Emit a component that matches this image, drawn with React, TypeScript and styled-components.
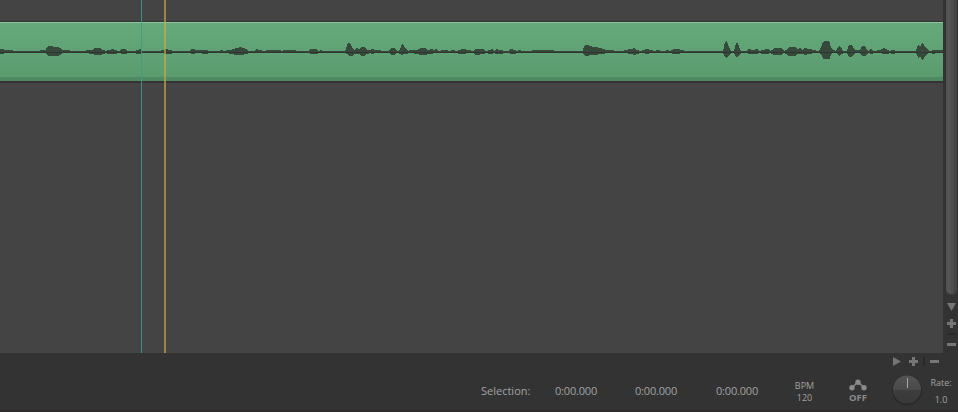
import React from "react";
import styled, { createGlobalStyle } from "styled-components";

const GlobalStyle = createGlobalStyle`
  * { box-sizing: border-box; }
  body { margin: 0; background: #333; overflow: hidden; font-family: "Open Sans", "Noto Sans", sans-serif; }
`;

const Window = styled.div`
  width: 958px;
  height: 412px;
  display: flex;
  flex-direction: column;
  background: #333;
`;

const Workspace = styled.div`
  display: flex;
  height: 353px;
`;

const Arrange = styled.div`
  position: relative;
  width: 943px;
  height: 353px;
  padding-top: 21px;
  overflow: hidden;
  background: #444;
`;

const Clip = styled.div`
  height: 62px;
  border-top: 1px solid #333;
  border-bottom: 2px solid #333;
  background: linear-gradient(to bottom, #8fc9a2 0 1px, #65a97b 1px, #5b9c6f 55px, #4d8a61 55px);
`;

const Wave = styled.svg`
  display: block;
`;

const Cursor = styled.div<{ $x: number; $w: number; $color: string }>`
  position: absolute;
  top: 0;
  bottom: 0;
  left: ${(p) => p.$x}px;
  width: ${(p) => p.$w}px;
  background: ${(p) => p.$color};
`;

const VerticalBar = styled.div`
  width: 15px;
  padding-left: 3px;
  display: flex;
  flex-direction: column;
`;

const Thumb = styled.div`
  width: 11px;
  height: 295px;
  border-radius: 0 0 5px 5px;
  background: linear-gradient(to right, #555 0 5px, #4d4d4d 5px 8px, #444 8px);
  box-shadow: inset 0 -1px 1px #3b3b3b;
`;

const ZoomIcons = styled.svg`
  display: block;
  fill: #757575;
`;

const HorizontalBar = styled.div`
  height: 17px;
  display: flex;
  justify-content: flex-end;
  padding-right: 18px;
`;

const Transport = styled.div`
  height: 42px;
  display: flex;
  padding-left: 481px;
  color: #a2a2a2;
  background: linear-gradient(to bottom, #333 40px, #302c2e 40px);

  > * { flex-shrink: 0; }
`;

const Reading = styled.div<{ $w: number; $spacing?: number }>`
  width: ${(p) => p.$w}px;
  padding-top: 13px;
  font-size: 11px;
  line-height: 16px;
  letter-spacing: ${(p) => p.$spacing ?? 0}px;
  white-space: nowrap;
`;

const Stack = styled.div<{ $w: number; $top: number; $step: number; $size: number }>`
  width: ${(p) => p.$w}px;
  padding-top: ${(p) => p.$top}px;
  font-size: ${(p) => p.$size}px;
  line-height: ${(p) => p.$step}px;
  text-align: center;
  white-space: nowrap;
`;

const Envelope = styled.div`
  width: 24px;
  margin-left: 31px;
  padding-top: 9px;
  display: flex;
  flex-direction: column;
  align-items: center;
  font-size: 9.5px;
  font-weight: 700;
  line-height: 13px;
  color: #8b8b8b;
`;

const Knob = styled.svg`
  display: block;
  margin-left: 21px;
  margin-top: 3px;
`;

// Each entry: x, rows above the centre line, rows below it.
const peaks: [number, number, number][] = [
  [0, 2, 1], [3, 2, 1], [5, 1, 0], [12, 1, 0], [13, 0, 0], [39, 0, 0], [40, 1, 0], [45, 1, 0], [46, 2, 1], [47, 4, 2], [48, 5, 3],
  [52, 5, 3], [53, 4, 3], [57, 4, 3], [60, 3, 2], [63, 1, 0], [69, 1, 0], [70, 0, 0], [85, 0, 0],
  [86, 1, 0], [92, 1, 1], [95, 3, 2], [100, 3, 2], [103, 1, 1], [106, 0, 0], [108, 1, 1], [113, 2, 1], [115, 1, 1],
  [119, 0, 0], [122, 2, 1], [125, 2, 1], [128, 0, 0], [134, 0, 0], [137, 1, 1], [140, 2, 1], [142, 0, 0],
  [160, 0, 0], [162, 1, 0], [166, 2, 1], [170, 1, 1], [173, 0, 0], [190, 0, 0], [191, 2, 1], [194, 2, 1],
  [196, 1, 0], [207, 1, 1], [209, 0, 0], [219, 0, 0], [221, 1, 0], [224, 0, 0], [227, 1, 0], [231, 1, 1],
  [236, 3, 2], [241, 4, 2], [246, 2, 1], [249, 0, 0], [254, 0, 0], [256, 2, 0], [259, 1, 0], [264, 0, 0],
  [267, 1, 0], [280, 1, 0], [281, 0, 0], [284, 1, 0], [295, 1, 0], [296, 0, 0], [308, 0, 0], [311, 2, 1],
  [316, 2, 1], [319, 0, 0], [321, 1, 0], [323, 0, 0], [345, 0, 0], [347, 5, 1], [348, 8, 2], [350, 8, 3], [352, 4, 3],
  [354, 1, 1], [357, 3, 1], [359, 1, 1], [361, 4, 3], [364, 4, 3], [367, 1, 1], [370, 1, 0], [372, 2, 1],
  [375, 1, 0], [380, 1, 0], [382, 0, 0], [389, 0, 0], [391, 3, 2], [394, 3, 2], [397, 0, 0], [400, 1, 1],
  [402, 8, 2], [404, 5, 1], [407, 1, 1], [408, 0, 0], [410, 1, 0], [417, 1, 1], [421, 3, 2], [425, 3, 2], [428, 1, 1],
  [432, 2, 1], [434, 1, 0], [436, 2, 0], [438, 0, 0], [443, 1, 0], [447, 1, 0], [449, 0, 0], [452, 1, 0],
  [457, 0, 0], [459, 1, 1], [463, 2, 1], [468, 1, 0], [473, 0, 0], [476, 2, 2], [483, 2, 1], [486, 0, 0],
  [489, 1, 1], [492, 2, 1], [494, 0, 0], [496, 2, 1], [500, 1, 1], [505, 0, 0], [508, 0, 0], [511, 2, 1],
  [515, 1, 1], [517, 0, 0], [519, 1, 0], [523, 0, 0], [531, 0, 0], [533, 1, 0], [553, 1, 0], [555, 0, 0],
  [583, 0, 0], [584, 5, 2], [585, 6, 3], [588, 6, 3], [589, 5, 2], [595, 4, 2], [600, 3, 1], [603, 2, 1], [606, 1, 0],
  [613, 1, 0], [615, 0, 0], [622, 0, 0], [625, 1, 0], [631, 2, 1], [634, 3, 2], [637, 1, 1], [640, 0, 0],
  [643, 1, 0], [647, 2, 1], [651, 1, 0], [654, 0, 0], [657, 1, 0], [663, 0, 0], [668, 1, 0], [670, 0, 0],
  [674, 2, 1], [678, 2, 1], [681, 1, 0], [687, 0, 0], [723, 0, 0], [724, 4, 2], [725, 9, 4], [726, 10, 5], [727, 9, 5],
  [729, 4, 2], [731, 0, 0], [734, 0, 0], [735, 4, 2], [736, 8, 4], [738, 8, 4], [740, 2, 1], [741, 0, 0], [746, 0, 0],
  [749, 2, 1], [753, 1, 1], [757, 2, 1], [759, 0, 0], [762, 1, 1], [768, 2, 1], [770, 0, 0], [772, 1, 1],
  [774, 3, 2], [781, 3, 2], [784, 0, 0], [786, 1, 1], [789, 4, 3], [795, 4, 3], [797, 2, 1], [800, 3, 1],
  [802, 1, 1], [805, 3, 2], [809, 2, 1], [814, 1, 0], [817, 0, 0], [819, 0, 0], [820, 2, 1], [822, 6, 2], [823, 9, 6], [824, 10, 6],
  [828, 10, 6], [830, 8, 6], [831, 3, 1], [833, 1, 0], [836, 0, 0], [837, 2, 1], [839, 5, 3], [842, 2, 1], [843, 0, 0],
  [847, 0, 0], [849, 6, 4], [852, 6, 4], [854, 2, 1], [855, 1, 0], [859, 1, 0], [860, 1, 1], [862, 5, 3], [865, 5, 3], [867, 1, 1], [868, 0, 0],
  [871, 2, 1], [874, 0, 0], [880, 1, 0], [884, 3, 1], [888, 1, 1], [890, 0, 0], [892, 1, 1], [898, 0, 0],
  [916, 0, 0], [917, 4, 2], [919, 7, 6], [920, 4, 3], [921, 6, 5], [922, 8, 7], [923, 8, 7], [925, 4, 3], [928, 1, 0], [930, 0, 0], [933, 1, 1],
  [937, 1, 0], [943, 1, 0],
];

const wavePath =
  "M" + peaks.map(([x, up]) => `${x} ${29 - up}`).join("L") +
  "L" + [...peaks].reverse().map(([x, , down]) => `${x} ${31 + down}`).join("L") + "Z";

export default function App() {
  return (
    <>
      <GlobalStyle />
      <Window>
        <Workspace>
          <Arrange>
            <Clip>
              <Wave width="943" height="59" shapeRendering="crispEdges">
                <path d={wavePath} fill="#354a3b" />
                <path d="M0 30H943V31H0Z" fill="#303432" />
              </Wave>
            </Clip>
            <Cursor $x={141} $w={1} $color="rgba(58, 157, 137, .87)" />
            <Cursor $x={164} $w={2} $color="rgba(204, 168, 72, .66)" />
          </Arrange>
          <VerticalBar>
            <Thumb />
            <ZoomIcons width="12" height="58">
              <path d="M1 8h9l-4.5 8z" />
              <path d="M4 24h3v3h3v3H7v3H4v-3H1v-3h3zM1 48h9v3H1z" />
              <path d="M1 38h9v2H1z" fill="#292929" />
            </ZoomIcons>
          </VerticalBar>
        </Workspace>
        <HorizontalBar>
          <ZoomIcons width="48" height="17">
            <path d="M1 4l8 4.5L1 13z" />
            <path d="M20 4h3v3h3v3h-3v3h-3v-3h-3V7h3zM38 7h9v3h-9z" />
            <path d="M31 4h2v9h-2z" fill="#292929" />
          </ZoomIcons>
        </HorizontalBar>
        <Transport>
          <Reading $w={74}>Selection:</Reading>
          <Reading $w={80} $spacing={-0.18}>0:00.000</Reading>
          <Reading $w={81} $spacing={-0.18}>0:00.000</Reading>
          <Reading $w={78} $spacing={-0.18}>0:00.000</Reading>
          <Stack $w={21} $top={10} $step={12} $size={9}>
            <div>BPM</div>
            <div>120</div>
          </Stack>
          <Envelope>
            <svg width="18" height="12" fill="#8b8b8b">
              <path d="M3 8.5L9 3l6 5.500" fill="none" stroke="#8b8b8b" strokeWidth="1.3" />
              <circle cx="9" cy="3.300" r="2.700" />
              <circle cx="3" cy="8.700" r="2.700" />
              <circle cx="15" cy="8.700" r="2.700" />
            </svg>
            <span>OFF</span>
          </Envelope>
          <Knob width="32" height="34">
            <defs>
              <linearGradient id="knobFace" x1="0" y1="0" x2="0" y2="1">
                <stop offset="0" stopColor="#555" />
                <stop offset=".52" stopColor="#494949" />
                <stop offset=".52" stopColor="#3d3d3d" />
                <stop offset="1" stopColor="#383838" />
              </linearGradient>
            </defs>
            <circle cx="16" cy="17.500" r="15" fill="#292929" />
            <circle cx="16" cy="16.500" r="14" fill="url(#knobFace)" />
            <path d="M16.500 5v10" stroke="#aaa" strokeWidth="1" />
          </Knob>
          <Stack $w={36} $top={4} $step={17} $size={9}>
            <div>Rate:</div>
            <div>1.0</div>
          </Stack>
        </Transport>
      </Window>
    </>
  );
}
